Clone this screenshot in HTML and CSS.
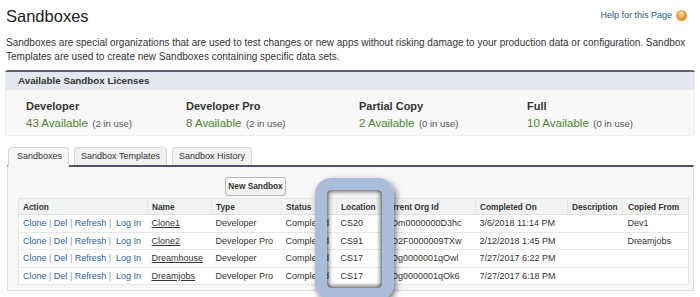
FILE: index.html
```html
<!DOCTYPE html>
<html lang="en">
<head>
<meta charset="utf-8">
<title>Sandboxes</title>
<link rel="stylesheet" href="styles.css">
</head>
<body>
<div class="page">
  <div class="head">
    <h1 class="title">Sandboxes</h1>
    <a class="help" href="#">Help for this Page <span class="help-icon">?</span></a>
  </div>
  <p class="desc">Sandboxes are special organizations that are used to test changes or new apps without risking damage to your production data or configuration. Sandbox<br>Templates are used to create new Sandboxes containing specific data sets.</p>

  <section class="licenses">
    <div class="lic-head">Available Sandbox Licenses</div>
    <div class="lic-body">
      <div class="lic">
        <div class="lic-name">Developer</div>
        <div class="lic-avail"><span class="num">43 Available</span> <span class="use">(2 in use)</span></div>
      </div>
      <div class="lic">
        <div class="lic-name">Developer Pro</div>
        <div class="lic-avail"><span class="num">8 Available</span> <span class="use">(2 in use)</span></div>
      </div>
      <div class="lic">
        <div class="lic-name">Partial Copy</div>
        <div class="lic-avail"><span class="num">2 Available</span> <span class="use">(0 in use)</span></div>
      </div>
      <div class="lic">
        <div class="lic-name">Full</div>
        <div class="lic-avail"><span class="num">10 Available</span> <span class="use">(0 in use)</span></div>
      </div>
    </div>
  </section>

  <div class="tabs">
    <div class="tab active">Sandboxes</div>
    <div class="tab">Sandbox Templates</div>
    <div class="tab">Sandbox History</div>
  </div>
  <div class="tab-panel">
    <div class="btn-row"><button class="btn" type="button">New Sandbox</button></div>
    <table class="list">
      <colgroup>
        <col class="c-action"><col class="c-name"><col class="c-type"><col class="c-status"><col class="c-loc"><col class="c-org"><col class="c-done"><col class="c-desc"><col class="c-copied">
      </colgroup>
      <thead>
        <tr><th>Action</th><th>Name</th><th>Type</th><th>Status</th><th>Location</th><th>Current Org Id</th><th>Completed On</th><th>Description</th><th>Copied From</th></tr>
      </thead>
      <tbody>
        <tr><td class="acts"><a href="#">Clone</a> | <a href="#">Del</a> | <a href="#">Refresh</a> |&nbsp; <a href="#">Log In</a></td><td><a class="nm" href="#">Clone1</a></td><td>Developer</td><td>Completed</td><td>CS20</td><td>00Dm0000000D3hc</td><td>3/6/2018 11:14 PM</td><td></td><td>Dev1</td></tr>
        <tr><td class="acts"><a href="#">Clone</a> | <a href="#">Del</a> | <a href="#">Refresh</a> |&nbsp; <a href="#">Log In</a></td><td><a class="nm" href="#">Clone2</a></td><td>Developer Pro</td><td>Completed</td><td>CS91</td><td>00D2F0000009TXw</td><td>2/12/2018 1:45 PM</td><td></td><td>Dreamjobs</td></tr>
        <tr><td class="acts"><a href="#">Clone</a> | <a href="#">Del</a> | <a href="#">Refresh</a> |&nbsp; <a href="#">Log In</a></td><td><a class="nm" href="#">Dreamhouse</a></td><td>Developer</td><td>Completed</td><td>CS17</td><td>00Dg0000001qOwl</td><td>7/27/2017 6:22 PM</td><td></td><td></td></tr>
        <tr><td class="acts"><a href="#">Clone</a> | <a href="#">Del</a> | <a href="#">Refresh</a> |&nbsp; <a href="#">Log In</a></td><td><a class="nm" href="#">Dreamjobs</a></td><td>Developer Pro</td><td>Completed</td><td>CS17</td><td>00Dg0000001qOk6</td><td>7/27/2017 6:18 PM</td><td></td><td></td></tr>
      </tbody>
    </table>
  </div>
  <div class="highlight"></div>
</div>
</body>
</html>
```

FILE: styles.css
```css
* { box-sizing: border-box; }
html, body { margin: 0; padding: 0; background: #fff; }
body {
  font-family: "Liberation Sans", Arial, Helvetica, sans-serif;
  color: #333;
  width: 700px;
  height: 297px;
  overflow: hidden;
}
.page { position: relative; padding: 6px 5px 0 5px; }

.head { display: flex; align-items: center; justify-content: space-between; height: 20px; }
.title { margin: 0 0 0 1px; font-size: 16.5px; line-height: 20px; font-weight: normal; color: #222; }
.help { display: flex; align-items: center; gap: 4px; font-size: 9px; color: #1d5a9a; text-decoration: none; margin-right: 8px; margin-top: -2px; }
.help-icon {
  display: inline-flex; align-items: center; justify-content: center;
  width: 11px; height: 11px; border-radius: 50%;
  background: radial-gradient(circle at 40% 35%, #f8c36a, #e38c1f 70%);
  color: #fff; font-weight: bold; font-size: 8px; line-height: 1;
}

.desc { margin: 10px 0 0 1px; font-size: 10px; line-height: 13.5px; color: #333; }

.licenses { margin-top: 7px; border-top: 2px solid #59627a; border-radius: 3px 3px 4px 4px; }
.lic-head { height: 18px; line-height: 18px; background: #e4e7ee; padding-left: 13px; font-size: 9.8px; font-weight: bold; color: #333; }
.lic-body {
  display: grid; grid-template-columns: 160px 173px 168px 1fr;
  padding: 9px 0 3px 20px; background: #f8f8f8;
  border: 1px solid #eceef0; border-top: none; border-radius: 0 0 4px 4px;
}
.lic-name { font-size: 11px; line-height: 14px; font-weight: bold; color: #333; }
.lic-avail { line-height: 17px; }
.lic-avail .num { font-size: 11.5px; color: #4a862c; }
.lic-avail .use { font-size: 9.5px; color: #555; }

.tabs { display: flex; gap: 5px; margin: 11px 0 0 3px; height: 18px; align-items: flex-end; }
.tab {
  height: 18px; line-height: 17px; padding: 0 6px;
  font-size: 9px; color: #333;
  background: #f1f1f1; border: 1px solid #d6d6d6; border-bottom: none;
  border-radius: 4px 4px 0 0;
  position: relative; z-index: 1;
}
.tab.active { height: 20px; margin-bottom: -2px; background: #f7f7f7; padding: 0 6px 0 8px; }

.tab-panel {
  margin: 0 1px 0 2px;
  height: 126px;
  background: #f7f7f7;
  border: 1px solid #dddddd; border-top: 2px solid #4d5570;
  padding: 8px 5px 0 10px;
}
.btn-row { padding-left: 207px; height: 19px; }
.btn {
  width: 61px; height: 19px; padding: 0;
  font-family: inherit; font-size: 8.3px; font-weight: bold; color: #333;
  background: linear-gradient(#ffffff, #eeeeee);
  border: 1px solid #b8b8b8; border-radius: 3px;
}

.list {
  margin-top: 4px;
  width: 670px; table-layout: fixed; border-collapse: collapse;
  background: #fff; border: 1px solid #e2e4e6;
  font-size: 9px; color: #333;
}
.c-action { width: 129px; } .c-name { width: 64px; } .c-type { width: 70px; }
.c-status { width: 55px; } .c-loc { width: 41px; } .c-org { width: 98px; }
.c-done { width: 92px; } .c-desc { width: 55px; } .c-copied { width: 66px; }

.list th {
  height: 16px; padding: 0 0 0 4px; text-align: left;
  font-size: 8.3px; font-weight: bold; color: #333;
  background: #f2f3f3; border-bottom: 1px solid #e0e0e0;
  border-left: 1px solid #e6e6e6;
  white-space: nowrap; overflow: hidden;
}
.list th:first-child { border-left: none; }
.list td {
  height: 17.5px; padding: 0 0 0 4px;
  border-bottom: 1px solid #e8e8e8;
  white-space: nowrap; overflow: hidden;
}
.list td:last-child, .list th:last-child { padding-left: 5px; }
.acts { color: #8a9bb5; }
.acts a { color: #2a5f9e; text-decoration: none; }
.nm { color: #333; text-decoration: underline; }

.highlight {
  position: absolute; left: 315px; top: 178px;
  width: 79px; height: 122px;
  border: 12px solid #a9bcd8; border-radius: 16px;
  box-shadow: 2px 3px 6px rgba(0, 0, 0, 0.55), inset 0 0 5px 1px rgba(0, 0, 0, 0.75);
}
```
